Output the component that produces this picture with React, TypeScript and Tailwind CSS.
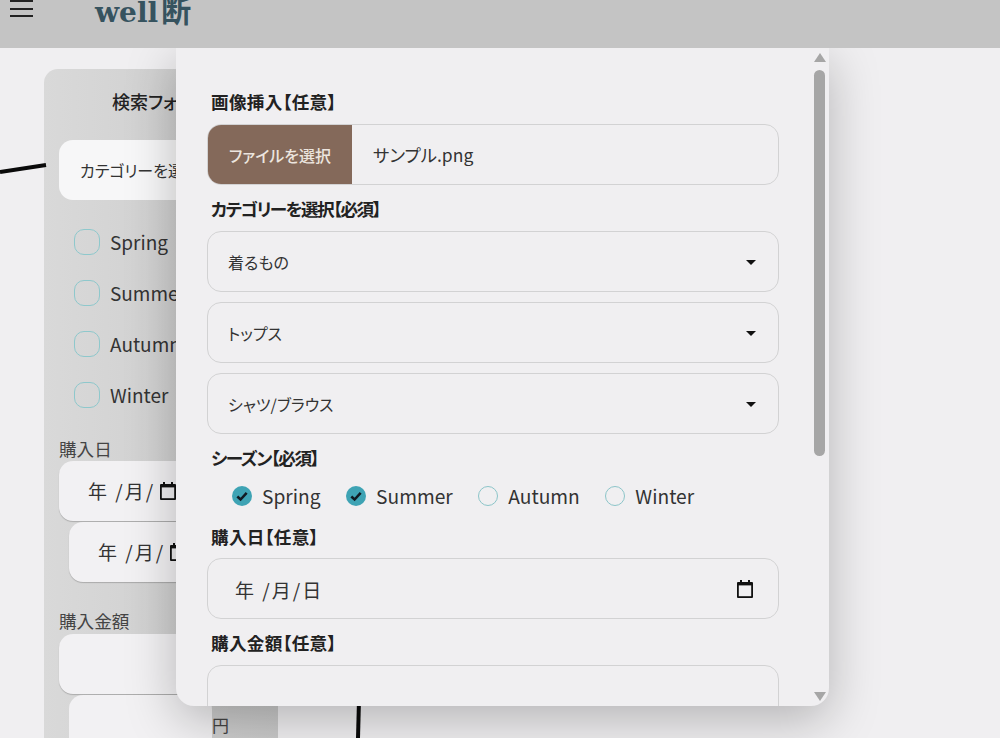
import React from 'react';

const jp = "font-['Noto_Sans_CJK_JP','Noto_Sans',sans-serif] [font-feature-settings:'palt']";

const Calendar = ({ className }: { className: string }) => (
  <svg viewBox="0 0 18 18" className={className} fill="none">
    <path d="M4 0h2v2h6V0h2v2h2a1 1 0 0 1 1 1v14a1 1 0 0 1-1 1H2a1 1 0 0 1-1-1V3a1 1 0 0 1 1-1h2z" fill="#111" />
    <rect x="2.8" y="5.4" width="12.4" height="10.8" fill="#f0eff1" />
  </svg>
);

const Label = ({ children, className = 'mt-[13px] tracking-[0.3px]' }: { children: React.ReactNode; className?: string }) => (
  <div className={`ml-[4px] h-[22px] text-[17.6px] leading-[22px] font-bold whitespace-nowrap text-[#222] ${className}`}>{children}</div>
);

const SelectBox = ({ value, className = '' }: { value: string; className?: string }) => (
  <div className={`flex h-[61px] items-center justify-between rounded-[14px] border border-[#d2d2d3] pr-[22px] pl-5 text-base text-[#333] ${className}`}>
    <span>{value}</span>
    <span className="mt-[2px] h-0 w-0 border-x-[5px] border-t-[5px] border-x-transparent border-t-[#111]" />
  </div>
);

const Season = ({ name, checked }: { name: string; checked?: boolean }) => (
  <div className="flex items-center gap-[10px]">
    {checked ? (
      <span className="flex h-5 w-5 items-center justify-center rounded-full bg-[#3ea3b4]">
        <svg viewBox="0 0 12 12" className="h-[14px] w-[14px]" fill="none" stroke="#111a22" strokeWidth="2.2">
          <path d="M2 6.4l2.8 2.6L10 3.4" />
        </svg>
      </span>
    ) : (
      <span className="h-5 w-5 rounded-full border-[1.5px] border-[#8cc5c9]" />
    )}
    <span>{name}</span>
  </div>
);

const FilterCheck = ({ name }: { name: string }) => (
  <div className="flex h-[26px] items-center gap-[10px] text-[19px] text-[#333]">
    <span className="h-[26px] w-[26px] shrink-0 rounded-[10px] border-[1.5px] border-[#8ec8cc]" />
    <span className="whitespace-nowrap">{name}</span>
  </div>
);

const DateText = ({ className }: { className: string }) => (
  <div className={`h-[60px] rounded-[14px] bg-[#f2f1f3] shadow-[0_1px_1px_rgba(0,0,0,0.2)] ${className}`}>
    <div className="flex h-full items-center gap-[4px] pt-[1px] text-[19px] tracking-[2px] whitespace-nowrap text-[#333]">
      <span>年 /月/</span>
      <Calendar className="mb-[2px] h-[18px] w-[18px] shrink-0" />
    </div>
  </div>
);

const SearchPanel = () => (
  <aside className="mt-[21px] ml-[44px] h-[720px] w-[234px] shrink-0 overflow-hidden rounded-t-[14px] bg-gradient-to-r from-[#d9d9d9] to-[#cacaca] pt-[20px] pl-[15px]">
    <h2 className="ml-[53px] text-[18px] leading-6 font-medium whitespace-nowrap text-[#222]">検索フォーム</h2>
    <div className="mt-[27px] flex h-[60px] w-[300px] items-center rounded-[14px] bg-[#f7f7f8] pl-[21px] text-[16px] text-[#333]">
      カテゴリーを選択
    </div>
    <div className="mt-[29px] ml-[15px] flex flex-col gap-[25px]">
      <FilterCheck name="Spring" />
      <FilterCheck name="Summer" />
      <FilterCheck name="Autumn" />
      <FilterCheck name="Winter" />
    </div>
    <div className="mt-[29px] h-[24px] text-[17.6px] leading-[24px] text-[#444]">購入日</div>
    <DateText className="w-[190px] pl-[29px]" />
    <DateText className="mt-[1px] ml-[10px] w-[190px] pl-[29px]" />
    <div className="mt-[27px] h-[24px] text-[17.6px] leading-[24px] text-[#444]">購入金額</div>
    <div className="mt-[1px] h-[60px] w-[190px] rounded-[14px] bg-[#f2f1f3] shadow-[0_1px_1px_rgba(0,0,0,0.2)]" />
    <div className="mt-[1px] ml-[10px] flex items-start">
      <div className="h-[61px] w-[143px] shrink-0 rounded-[14px] bg-[#f2f1f3]" />
      <span className="mt-[18px] text-[17px] leading-6 text-[#444]">円</span>
    </div>
  </aside>
);

const Modal = () => (
  <div className="absolute top-[48px] left-[176px] h-[658px] w-[653px] overflow-hidden rounded-b-[18px] bg-[#f0eff1] pt-[43px] pl-[31px] shadow-[0_14px_50px_rgba(0,0,0,0.25)]">
    <div className="w-[572px]">
      <Label className="tracking-[0.3px]">画像挿入【任意】</Label>
      <div className="mt-[11px] flex h-[61px] items-center overflow-hidden rounded-[14px] border border-[#d2d2d3]">
        <div className="flex h-full w-[144px] items-center justify-center bg-[#84695a] text-base font-medium text-[#ece5df]">
          ファイルを選択
        </div>
        <span className="ml-[21px] pt-[1px] text-[17.5px] text-[#333]">サンプル.png</span>
      </div>
      <Label className="mt-[13px] tracking-[-1.5px]">カテゴリーを選択【必須】</Label>
      <SelectBox value="着るもの" className="mt-[11px]" />
      <SelectBox value="トップス" className="mt-[10px]" />
      <SelectBox value="シャツ/ブラウス" className="mt-[10px]" />
      <Label className="mt-[13px] tracking-[-1.4px]">シーズン【必須】</Label>
      <div className="mt-[15px] ml-[25px] flex h-6 items-center gap-[25.5px] text-[19.2px] text-[#333]">
        <Season name="Spring" checked />
        <Season name="Summer" checked />
        <Season name="Autumn" />
        <Season name="Winter" />
      </div>
      <Label className="mt-[18px] tracking-[0.3px]">購入日【任意】</Label>
      <div className="mt-[10px] flex h-[61px] items-center justify-between rounded-[14px] border border-[#d2d2d3] pr-6 pl-[27px] text-[19px] tracking-[2px] text-[#333]">
        <span className="pt-[3px]">年 /月/日</span>
        <Calendar className="h-[18px] w-[18px]" />
      </div>
      <Label>購入金額【任意】</Label>
      <div className="mt-[11px] h-[61px] rounded-[14px] border border-[#d2d2d3]" />
    </div>
    {/* scrollbar */}
    <div className="absolute top-[5px] right-[4px] bottom-[5px] flex w-[11px] flex-col items-center">
      <span className="h-0 w-0 border-x-[6px] border-b-[9px] border-x-transparent border-b-[#a6a6a6]" />
      <span className="mt-[8px] h-[386px] w-[11px] rounded-full bg-[#a6a6a6]" />
      <span className="mt-auto h-0 w-0 border-x-[6px] border-t-[9px] border-x-transparent border-t-[#a6a6a6]" />
    </div>
  </div>
);

export default function App() {
  return (
    <div className={`relative h-[738px] w-[1000px] overflow-hidden bg-[#f0eff1] ${jp}`}>
      {/* hand-drawn lines behind the form */}
      <svg className="absolute inset-0 h-full w-full" viewBox="0 0 1000 738" fill="none" stroke="#0a0a0a" strokeWidth="4">
        <path d="M0 172L46 165" />
        <path d="M359 700L358 738" />
      </svg>
      <header className="relative z-10 flex h-[48px] items-start bg-[#c4c4c4]">
        <div className="ml-[10px] flex w-[23px] flex-col gap-[5.5px]">
          <span className="h-[2px] bg-[#222]" />
          <span className="h-[2px] bg-[#222]" />
          <span className="h-[2px] bg-[#222]" />
        </div>
        <div className="-mt-[11px] ml-[62px] flex items-baseline font-['DejaVu_Serif',serif] text-[28px] leading-[40px] font-bold text-[#36535f]">
          well<span className="ml-[3px] font-['Noto_Sans_CJK_JP',sans-serif] text-[30px] font-bold">断</span>
        </div>
      </header>
      <SearchPanel />
      <Modal />
    </div>
  );
}
